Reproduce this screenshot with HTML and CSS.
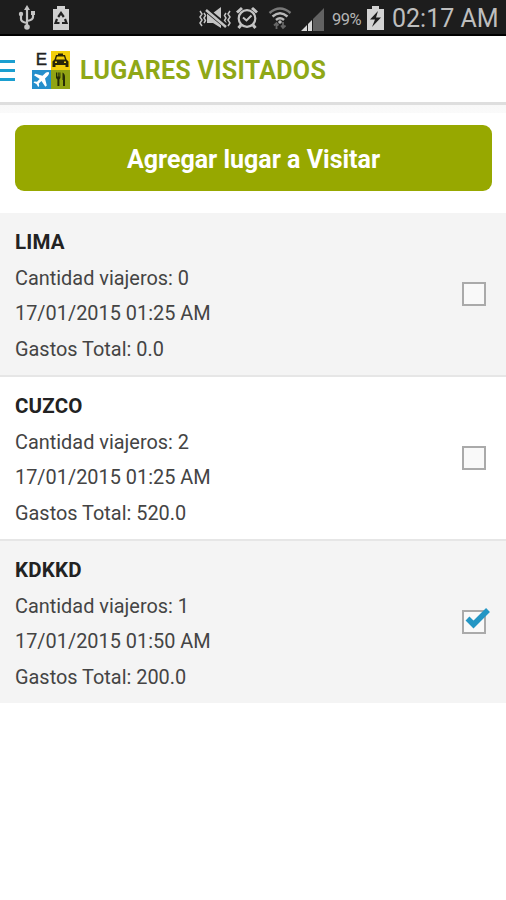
FILE: index.html
```
<!DOCTYPE html>
<html lang="es">
<head>
    <meta charset="UTF-8">
    <meta name="viewport" content="width=device-width, initial-scale=1.0">
    <title>Lugares Visitados</title>
    <link rel="stylesheet" href="styles.css">
</head>
<body>
<div class="statusbar">
    <!-- usb -->
    <svg class="icon-usb" width="18" height="26" viewBox="0 0 18 26" fill="none" stroke="#c4c4c4" stroke-width="2.2">
        <path d="M9 3v19M3 9v5q0 3 6 4M15 8v4q0 3-6 4"/>
        <path d="M9 0l3 5H6z" fill="#c4c4c4" stroke="none"/>
        <rect x="13" y="6" width="4" height="4" fill="#c4c4c4" stroke="none"/>
        <circle cx="3" cy="9" r="2.2" fill="#c4c4c4" stroke="none"/>
        <circle cx="9" cy="22" r="2.8" fill="#c4c4c4" stroke="none"/>
    </svg>
    <!-- battery recycle -->
    <svg class="icon-recycle" width="18" height="26" viewBox="0 0 18 26">
        <path d="M5 1h8v3h4v21H1V4h4z" fill="#d0d0d0"/>
        <path d="M6.200 12L9 8l2.800 4M13 14l1.500 4H10M7.500 18h-4L5 14" fill="none" stroke="#222" stroke-width="2.200"/>
    </svg>
    <div class="status-right">
        <!-- vibrate / muted -->
        <svg class="icon-mute" width="34" height="24" viewBox="0 0 34 24" fill="none" stroke="#c4c4c4">
            <path d="M2 5l2 3-2 3 2 3-2 3 2 3M6 7l1.500 2.500L6 12l1.500 2.500L6 17M32 5l-2 3 2 3-2 3 2 3-2 3M28 7l-1.500 2.500L28 12l-1.500 2.500L28 17" stroke-width="1.500"/>
            <path d="M9 7h6l8-6v21l-8-5H9z" fill="#c4c4c4" stroke="none"/>
            <path d="M8 3.500l20 16.500" stroke="#1d1d1d" stroke-width="5"/>
            <path d="M8 4l20 17" stroke-width="2.500"/>
        </svg>
        <!-- alarm -->
        <svg class="icon-alarm" width="24" height="24" viewBox="0 0 24 24" fill="none" stroke="#c4c4c4">
            <circle cx="12" cy="12.500" r="8.300" stroke-width="2.200"/>
            <path d="M2 6.500L7 2M22 6.500L17 2M6 19l-2.500 3M18 19l2.500 3" stroke-width="3"/>
            <path d="M8 11.500l3.500 3 5-5" stroke-width="2"/>
        </svg>
        <!-- wifi -->
        <svg class="icon-wifi" width="24" height="24" viewBox="0 0 24 24" fill="none" stroke="#b8b8b8" stroke-width="2.400">
            <path d="M1.500 7Q12-2 22.500 7" stroke="#777"/>
            <path d="M4.500 10.500Q12 4 19.500 10.500M8 14q4-3.500 8 0"/>
            <circle cx="12" cy="16" r="1.800" fill="#b8b8b8" stroke="none"/>
            <path d="M8.500 23v-6M6 19.500L8.500 17l2 2.500M15 16v6M13 19.500l2 2.500 2.500-2.500" stroke="#666" stroke-width="1.800"/>
        </svg>
        <!-- signal -->
        <svg class="icon-signal" width="23" height="23" viewBox="0 0 23 23">
            <path d="M0 23L6 17v6zM7 16l4-4v11H7z" fill="#d8d8d8"/>
            <path d="M12 11l4-4v16h-4zM16 7l7-7v23h-7z" fill="#626262"/>
        </svg>
        <span class="percent">99%</span>
        <svg class="icon-battery" width="17" height="24" viewBox="0 0 17 24">
            <path d="M5 0h7v3h5v21H0V3h5z" fill="#d3d3d3"/>
            <path d="M11 5l-8 8.500h5L5 21l9-9.500H9z" fill="#1d1d1d"/>
        </svg>
        <span class="clock">02:17 AM</span>
    </div>
</div>

<div class="header">
    <div class="menu">
        <span></span>
        <span></span>
        <span></span>
    </div>
    <div class="logo">
        <div class="tile letter">E</div>
        <div class="tile taxi">
            <svg width="19" height="19" viewBox="0 0 19 19">
                <path d="M7 2.500h5v1.500h2l1.500 4.500 2 2V16h-3v-2H4.500v2h-3v-5.500l2-2L5 4h2z" fill="#2a2608"/>
                <path d="M6 5.500h7l1 3H5z" fill="#f3cf0a"/>
                <path d="M4 10.500h2V12H4zM13 10.500h2V12h-2z" fill="#f3cf0a"/>
            </svg>
        </div>
        <div class="tile plane">
            <svg width="19" height="19" viewBox="0 0 19 19">
                <path d="M14 2.500q2.500-1 3 0t-1 3l-3 3 1.800 7-1.500 1.300-3.800-5.800-2.700 2.500.4 2.500-1 1-1.700-3-3-1.500 1-1 2.500.3L7.700 9 2 5.200l1.300-1.500 7.200 2z" fill="#fff"/>
            </svg>
        </div>
        <div class="tile food">
            <svg width="19" height="19" viewBox="0 0 19 19">
                <path d="M5 2.500h1v4h.7v-4h1v4h.7v-4h1V8l-1 1.500V16h-2V9.500L5 8zM11.500 2.500q2.500 1 2.500 4.500v9h-2V10h-.5z" fill="#262c06"/>
            </svg>
        </div>
    </div>
    <h1>LUGARES VISITADOS</h1>
</div>

<div class="actions">
    <button class="add-btn"><span>Agregar lugar a Visitar</span></button>
</div>

<div class="list">
    <div class="item gray">
        <div class="info">
            <h2>LIMA</h2>
            <p>Cantidad viajeros: 0</p>
            <p>17/01/2015 01:25 AM</p>
            <p>Gastos Total: 0.0</p>
        </div>
        <div class="check"></div>
    </div>
    <div class="item">
        <div class="info">
            <h2>CUZCO</h2>
            <p>Cantidad viajeros: 2</p>
            <p>17/01/2015 01:25 AM</p>
            <p>Gastos Total: 520.0</p>
        </div>
        <div class="check"></div>
    </div>
    <div class="item gray">
        <div class="info">
            <h2>KDKKD</h2>
            <p>Cantidad viajeros: 1</p>
            <p>17/01/2015 01:50 AM</p>
            <p>Gastos Total: 200.0</p>
        </div>
        <div class="check">
            <svg class="tick" width="26" height="24" viewBox="0 0 26 24">
                <path d="M2.500 11.500l6 6L23 3" fill="none" stroke="#2496c4" stroke-width="5.500"/>
            </svg>
        </div>
    </div>
</div>
</body>
</html>
```
FILE: styles.css
```
* {
    box-sizing: border-box;
}

body {
    font-family: Roboto, sans-serif;
    background-color: #fff;
    margin: 0;
    padding: 0;
    overflow: hidden;
}

.statusbar {
    display: flex;
    align-items: center;
    height: 36px;
    background-color: #1d1d1d;
    border-bottom: 2px solid #000;
    padding: 2px 9px 0 18px;
}

.icon-recycle {
    margin-left: 16px;
}

.status-right {
    display: flex;
    align-items: center;
    margin-left: auto;
}

.icon-mute {
    margin-right: -1px;
}

.icon-alarm {
    margin-left: 4px;
}

.icon-wifi {
    margin-left: 9px;
}

.icon-signal {
    margin: 3px 8px 0 9px;
}

.percent {
    width: 35px;
    margin-top: 2px;
    color: #b4b4b4;
    font-size: 16.5px;
    letter-spacing: -0.5px;
}

.icon-battery {
    margin-top: -1px;
}

.clock {
    width: 105px;
    margin-left: 8px;
    color: #bebebe;
    font-size: 25px;
    white-space: nowrap;
}

.header {
    display: flex;
    align-items: center;
    height: 69px;
    background-color: #fff;
    border-bottom: 3px solid #dedede;
}

.menu {
    display: flex;
    flex-direction: column;
    gap: 6px;
    width: 15px;
    margin-top: 3px;
}

.menu span {
    height: 3px;
    background-color: #1b9fd0;
}

.logo {
    display: grid;
    grid-template-columns: 19px 19px;
    grid-template-rows: 19px 19px;
    margin-left: 17px;
    margin-top: 1px;
}

.tile {
    display: flex;
    align-items: center;
    justify-content: center;
}

.letter {
    font-family: "Liberation Sans", sans-serif;
    font-size: 17px;
    -webkit-text-stroke: 0.4px #222;
    color: #222;
}

.taxi {
    background-color: #f3cf0a;
}

.plane {
    background-color: #258fcc;
}

.food {
    background-color: #91a413;
}

.header h1 {
    margin: 3px 0 0 10px;
    font-size: 25px;
    font-weight: 700;
    letter-spacing: 0.3px;
    color: #8fa817;
    white-space: nowrap;
}

.actions {
    height: 108px;
    padding: 20px 14px 0 15px;
    background: linear-gradient(#f8f8f8 0, #fafafa 8px, #fff 8px);
}

.add-btn {
    display: block;
    width: 100%;
    height: 66px;
    padding: 2px 0 0;
    border: none;
    border-radius: 9px;
    background-color: #97a800;
    color: #fff;
    font-family: Roboto, sans-serif;
    font-size: 25px;
    font-weight: 700;
    cursor: pointer;
}

.item {
    display: flex;
    align-items: center;
    justify-content: space-between;
    height: 164px;
    padding: 0 20px 0 15px;
    border-bottom: 2px solid #e6e6e6;
}

.item:last-child {
    height: 162px;
    border-bottom: none;
}

.gray {
    background-color: #f4f4f4;
}

.info {
    padding-top: 3px;
}

.info h2 {
    margin: 0 0 1px;
    font-size: 20.5px;
    font-weight: 700;
    line-height: 36px;
    letter-spacing: 0.2px;
    color: #222;
}

.info p {
    margin: 0;
    font-size: 19.9px;
    line-height: 35.2px;
    color: #444;
}

.check {
    position: relative;
    width: 24px;
    height: 24px;
    border: 2px solid #aaa;
    background-color: #f9f9f9;
}

.tick {
    position: absolute;
    left: 1px;
    top: -5px;
}
```
